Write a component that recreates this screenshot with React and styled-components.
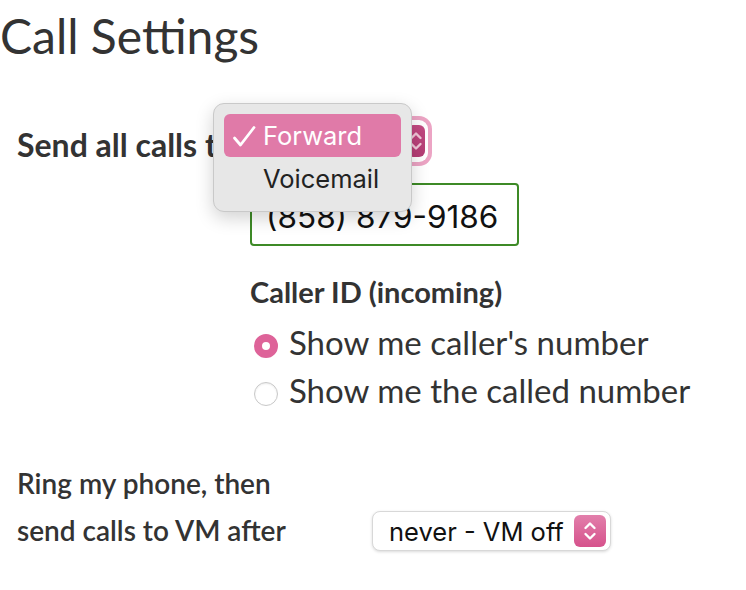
import React from 'react'
import styled, { createGlobalStyle } from 'styled-components'

const GlobalStyle = createGlobalStyle`
    html, body {
        margin: 0;
        padding: 0;
        background: #ffffff;
    }
    body {
        font-family: Lato, "Open Sans", sans-serif;
        color: #333333;
    }
`

const Page = styled.div`
    width: 746px;
    height: 590px;
    overflow: hidden;
    padding-top: 6px;
    box-sizing: border-box;
`

const Title = styled.h1`
    margin: 0;
    font-size: 48px;
    font-weight: 400;
    line-height: 60px;
    color: #333;
`

const FormRow = styled.div`
    display: grid;
    grid-template-columns: ${p => p.labelWidth}px auto;
    padding-left: 17px;
    margin-top: ${p => p.top}px;
`

const Label = styled.div`
    font-size: ${p => p.size || 32}px;
    font-weight: ${p => p.weight || 700};
    line-height: ${p => p.lh || 50}px;
    color: #333;
    white-space: nowrap;
`

const Controls = styled.div`
    display: flex;
    flex-direction: column;
    align-items: flex-start;
`

const SelectWrap = styled.div`
    position: relative;
    width: 178px;
    height: 42px;
    border-radius: 9px;
    background: #fff;
    box-shadow: 0 0 0 4px #eca4c4;
    display: flex;
    justify-content: flex-end;
    align-items: center;
    padding-right: 3px;
    box-sizing: border-box;
`

const Select = styled.div`
    display: flex;
    align-items: center;
    justify-content: space-between;
    gap: 10px;
    height: 40px;
    box-sizing: border-box;
    padding: 0 4px 0 16px;
    background: #fff;
    border: 1px solid #d8d8d8;
    border-radius: 8px;
    box-shadow: 0 1px 3px rgba(0, 0, 0, 0.15);
    font-family: Inter, "Liberation Sans", sans-serif;
    font-size: 25.5px;
    color: #111;
`

const ArrowBox = styled.div`
    width: ${p => p.w || 32}px;
    height: 32px;
    border-radius: 6px;
    background: ${p => p.dark
        ? 'linear-gradient(#c34a82, #b43c74)'
        : 'linear-gradient(#e27fab, #d6528c)'};
    display: flex;
    align-items: center;
    justify-content: center;
`

const Menu = styled.div`
    position: absolute;
    left: -37px;
    top: -17px;
    width: 199px;
    height: 109px;
    box-sizing: border-box;
    padding: 10px 10px;
    background: #e7e7e7;
    border: 1px solid #c9c9c9;
    border-radius: 11px;
    box-shadow: 0 6px 18px rgba(0, 0, 0, 0.18);
    display: flex;
    flex-direction: column;
    font-family: Inter, "Liberation Sans", sans-serif;
    font-size: 25.5px;
    z-index: 2;
`

const MenuItem = styled.div`
    height: 43px;
    display: flex;
    align-items: center;
    padding-left: ${p => p.selected ? 8 : 39}px;
    gap: 7px;
    border-radius: 6px;
    background: ${p => p.selected ? '#e07aa8' : 'transparent'};
    color: ${p => p.selected ? '#fff' : '#222'};
`

const PhoneInput = styled.div`
    margin-top: 21px;
    width: 269px;
    height: 63px;
    box-sizing: border-box;
    border: 2px solid #3d8a26;
    border-radius: 4px;
    padding-left: 14px;
    display: flex;
    align-items: center;
    padding-top: 4px;
    font-family: Inter, "Liberation Sans", sans-serif;
    font-size: 31.5px;
    color: #111;
`

const SubHeading = styled.div`
    margin-top: 28px;
    font-size: 29px;
    font-weight: 700;
    line-height: 36px;
    color: #333;
`

const RadioList = styled.div`
    margin-top: 8px;
    display: flex;
    flex-direction: column;
`

const RadioRow = styled.label`
    display: flex;
    align-items: center;
    gap: 11px;
    height: 48px;
    font-size: 33px;
    color: #333;
    margin-left: 4px;
    white-space: nowrap;
`

const RadioDot = styled.span`
    width: 24px;
    height: 24px;
    border-radius: 50%;
    box-sizing: border-box;
    flex: none;
    margin-top: 8px;
    background: #fff;
    ${p => p.checked
        ? 'border: 8px solid #de6399;'
        : 'border: 1px solid #c8c8c8; box-shadow: inset 0 1px 2px rgba(0,0,0,0.08);'}
`

const BottomControls = styled.div`
    display: flex;
    align-items: flex-end;
    padding-bottom: 3px;
`

const Chevrons = ({ color = '#fff' }) => (
    <svg width="14" height="26" viewBox="0 0 14 26" fill="none" stroke={color}
        strokeWidth="2.4" strokeLinecap="round" strokeLinejoin="round">
        <path d="M2.5 10 L7 5.5 L11.5 10" />
        <path d="M2.5 16 L7 20.5 L11.5 16" />
    </svg>
)

const Check = () => (
    <svg width="24" height="24" viewBox="0 0 24 24" fill="none" stroke="#fff"
        strokeWidth="2.8" strokeLinecap="round" strokeLinejoin="round">
        <path d="M2.5 14 L8.5 21 L22 3.5" />
    </svg>
)

export default function App() {
    return (
        <Page>
            <GlobalStyle />
            <Title>Call Settings</Title>
            <FormRow labelWidth={233} top={54}>
                <Label>Send all calls to</Label>
                <Controls>
                    <SelectWrap>
                        <ArrowBox dark w={18}>
                            <Chevrons color="#f3c8da" />
                        </ArrowBox>
                        <Menu>
                            <MenuItem selected><Check />Forward</MenuItem>
                            <MenuItem>Voicemail</MenuItem>
                        </Menu>
                    </SelectWrap>
                    <PhoneInput>(858) 879-9186</PhoneInput>
                    <SubHeading>Caller ID (incoming)</SubHeading>
                    <RadioList>
                        <RadioRow><RadioDot checked />Show me caller's number</RadioRow>
                        <RadioRow><RadioDot />Show me the called number</RadioRow>
                    </RadioList>
                </Controls>
            </FormRow>
            <FormRow labelWidth={355} top={46}>
                <Label size={28} weight={600} lh={47}>Ring my phone, then<br />send calls to VM after</Label>
                <BottomControls>
                    <Select>
                        never - VM off
                        <ArrowBox><Chevrons /></ArrowBox>
                    </Select>
                </BottomControls>
            </FormRow>
        </Page>
    )
}
